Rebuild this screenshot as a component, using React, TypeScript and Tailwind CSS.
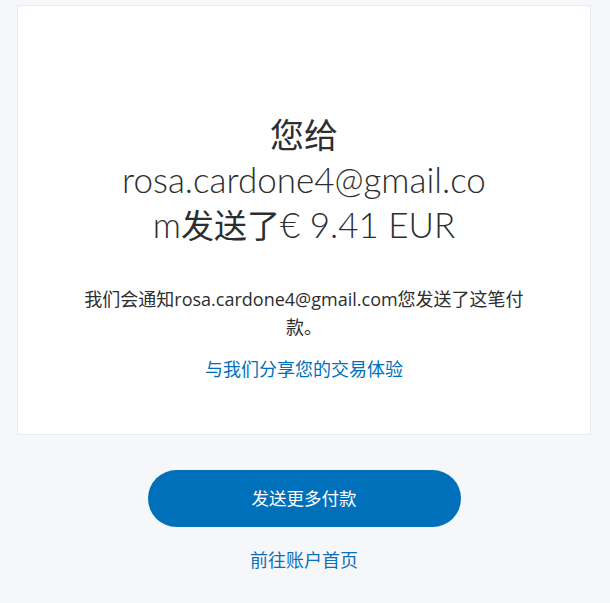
export default function App() {
  const cjk = '"Open Sans", "Noto Sans CJK SC", sans-serif';
  return (
    <div className="min-h-screen bg-[#f5f7fa] pt-[5px]" style={{ fontFamily: cjk }}>
      <div className="ml-[17px] w-[574px]">
        <section className="bg-white border border-[#eaeced] pt-[106px] pb-[51px] text-center text-[#2c2e2f]">
          <h1
            className="mx-auto w-[372px] text-[35px] leading-[45px] font-light break-words"
            style={{ fontFamily: 'Lato, "Noto Sans CJK SC", sans-serif' }}>
            <span className="text-[34px] font-normal">您给</span>rosa.cardone4@gmail.com
            <span className="text-[33px] font-normal">发送了</span>€ 9.41 EUR
          </h1>
          <p className="mx-auto mt-[37px] w-[460px] text-[18px] leading-[28px]">
            我们会通知rosa.cardone4@gmail.com您发送了这笔付款。
          </p>
          <a href="#" className="mt-[14px] inline-block text-[18px] leading-[28px] text-[#0070ba]">
            与我们分享您的交易体验
          </a>
        </section>
        <div className="flex flex-col items-center">
          <button
            type="button"
            className="mt-[35px] h-[57px] w-[313px] rounded-full bg-[#0070ba] text-[17.5px] text-white">
            发送更多付款
          </button>
          <a href="#" className="mt-[19px] text-[18px] leading-[28px] text-[#0d6fb8]">
            前往账户首页
          </a>
        </div>
      </div>
    </div>
  );
}
